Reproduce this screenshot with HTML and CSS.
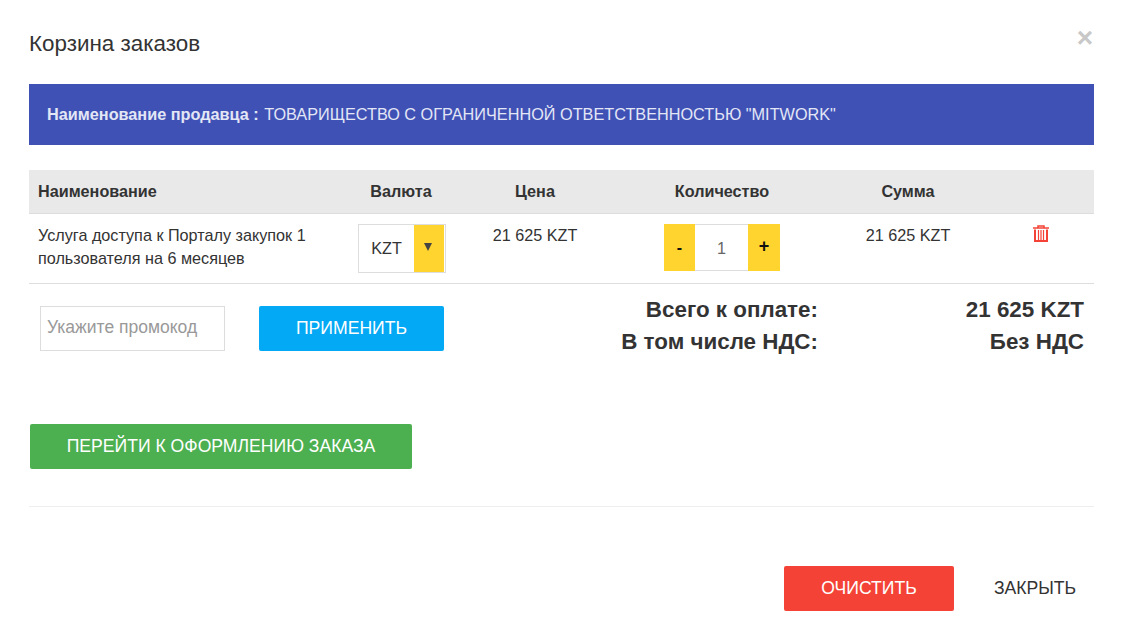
FILE: index.html
```html
<!DOCTYPE html>
<html lang="ru">
  <head>
    <meta charset="UTF-8" />
    <title>Корзина заказов</title>
    <link rel="stylesheet" href="styles.css">
  </head>
  <body>
    <div class="modal">
      <div class="modal-header">
        <h4 class="modal-title">Корзина заказов</h4>
        <span class="close-x">×</span>
      </div>
      <div class="seller"><b class="seller-label">Наименование продавца :</b> ТОВАРИЩЕСТВО С ОГРАНИЧЕННОЙ ОТВЕТСТВЕННОСТЬЮ "MITWORK"</div>

      <div class="cart-row cart-head">
        <div class="col-name">Наименование</div>
        <div>Валюта</div>
        <div>Цена</div>
        <div>Количество</div>
        <div>Сумма</div>
        <div></div>
      </div>
      <div class="cart-row cart-item">
        <div class="col-name">Услуга доступа к Порталу закупок 1 пользователя на 6 месяцев</div>
        <div class="currency">
          <span class="currency-value">KZT</span>
          <span class="currency-arrow"></span>
        </div>
        <div>21 625 KZT</div>
        <div class="qty">
          <button class="qty-btn">-</button>
          <span class="qty-value">1</span>
          <button class="qty-btn qty-plus">+</button>
        </div>
        <div>21 625 KZT</div>
        <div class="trash">
          <svg width="16" height="17" viewBox="0 0 16 17">
            <path d="M5 3V1h6v2M0 3h16" fill="none" stroke="#f44336" stroke-width="1.500"/>
            <path d="M2 4.500V16h12V4.500" fill="none" stroke="#f44336" stroke-width="2"/>
            <path d="M5.500 5v10M8 5v10M10.500 5v10" fill="none" stroke="#f44336" stroke-width="1.200"/>
          </svg>
        </div>
      </div>

      <div class="promo-total">
        <div class="promo">
          <input class="promo-input" type="text" placeholder="Укажите промокод">
          <button class="btn btn-apply">ПРИМЕНИТЬ</button>
        </div>
        <div class="totals">
          <div class="total-label">Всего к оплате:</div>
          <div class="total-value">21 625 KZT</div>
          <div class="total-label">В том числе НДС:</div>
          <div class="total-value">Без НДС</div>
        </div>
      </div>

      <button class="btn btn-order">ПЕРЕЙТИ К ОФОРМЛЕНИЮ ЗАКАЗА</button>

      <div class="modal-footer">
        <button class="btn btn-clear">ОЧИСТИТЬ</button>
        <button class="btn btn-close">ЗАКРЫТЬ</button>
      </div>
    </div>
  </body>
</html>
```

FILE: styles.css
```css
* {
  box-sizing: border-box;
  padding: 0px;
  margin: 0px;
}
body {
  background-color: #ffffff;
  font-family: "Liberation Sans", Arial, sans-serif;
  color: #333333;
  font-size: 16.2px;
}
.modal {
  width: 1122px;
  height: 626px;
  padding: 0px 28px 0px 29px;
  overflow: hidden;
}
.modal-header {
  display: flex;
  justify-content: space-between;
  height: 84px;
  padding-top: 30px;
}
.modal-title {
  font-size: 22.4px;
  line-height: 28px;
  font-weight: normal;
}
.close-x {
  font-size: 28px;
  line-height: 16px;
  font-weight: bold;
  color: #c8c8c8;
  margin-right: 1px;
}
.seller {
  height: 61px;
  line-height: 61px;
  padding-left: 18px;
  background-color: #3f51b5;
  color: #e3e6f5;
  font-size: 16.25px;
  margin-bottom: 25px;
}
.seller-label {
  margin-right: 1px;
}
.cart-row {
  display: grid;
  grid-template-columns: 321px 102px 166px 208px 164px 104px;
  text-align: center;
}
.col-name {
  text-align: left;
  padding-left: 9px;
}
.cart-head {
  height: 44px;
  line-height: 43px;
  background-color: #e9e9e9;
  font-weight: bold;
  border-bottom: 1px solid #dddddd;
}
.cart-item {
  height: 70px;
  padding-top: 10px;
  border-bottom: 1px solid #dddddd;
  line-height: 23px;
}
.cart-item .col-name {
  padding-right: 10px;
}
.currency {
  display: flex;
  width: 88px;
  height: 49px;
  margin-left: 8px;
  border: 1px solid #dddddd;
}
.currency-value {
  flex: 1;
  font-size: 16.2px;
  line-height: 47px;
}
.currency-arrow {
  position: relative;
  width: 30px;
  margin-right: 1px;
  background-color: #ffd42f;
}
.currency-arrow::after {
  content: "";
  position: absolute;
  left: 10px;
  top: 18px;
  border-top: 8px solid #444444;
  border-left: 4px solid transparent;
  border-right: 4px solid transparent;
}
.qty {
  display: flex;
  justify-content: center;
}
.qty-btn {
  width: 31px;
  height: 47px;
  border: none;
  background-color: #ffd42f;
  font-family: inherit;
  font-size: 16px;
  font-weight: bold;
  color: #111111;
}
.qty-plus {
  width: 32px;
  font-size: 18px;
  padding-bottom: 2px;
}
.qty-value {
  width: 53px;
  height: 47px;
  line-height: 47px;
  color: #666666;
  border-top: 1px solid #dddddd;
  border-bottom: 1px solid #dddddd;
}
.trash {
  padding-top: 1px;
  padding-right: 2px;
}
.promo-total {
  display: flex;
  justify-content: space-between;
  align-items: flex-start;
  padding-top: 22px;
}
.promo {
  display: flex;
  gap: 34px;
  padding-left: 11px;
}
.promo-input {
  width: 185px;
  height: 45px;
  padding: 0px 0px 2px 6px;
  border: 1px solid #dddddd;
  font-family: inherit;
  font-size: 17.500px;
}
.promo-input::placeholder {
  color: #999999;
}
.btn {
  border: none;
  border-radius: 2px;
  font-family: inherit;
  font-size: 17.600px;
  color: #ffffff;
}
.btn-apply {
  width: 185px;
  height: 45px;
  background-color: #03a9f4;
}
.totals {
  display: grid;
  grid-template-columns: 198px 266px;
  margin-top: -12px;
  padding-right: 10px;
  font-size: 22.400px;
  line-height: 32px;
  font-weight: bold;
  text-align: right;
}
.btn-order {
  display: block;
  width: 382px;
  height: 45px;
  margin: 66px 0px 37px 1px;
  background-color: #4caf50;
}
.modal-footer {
  display: flex;
  justify-content: flex-end;
  height: 105px;
  padding-top: 59px;
  border-top: 1px solid #eeeeee;
}
.btn-clear {
  width: 170px;
  height: 45px;
  background-color: #f44336;
}
.btn-close {
  width: 140px;
  height: 45px;
  padding-left: 22px;
  background: transparent;
  color: #333333;
}
```
